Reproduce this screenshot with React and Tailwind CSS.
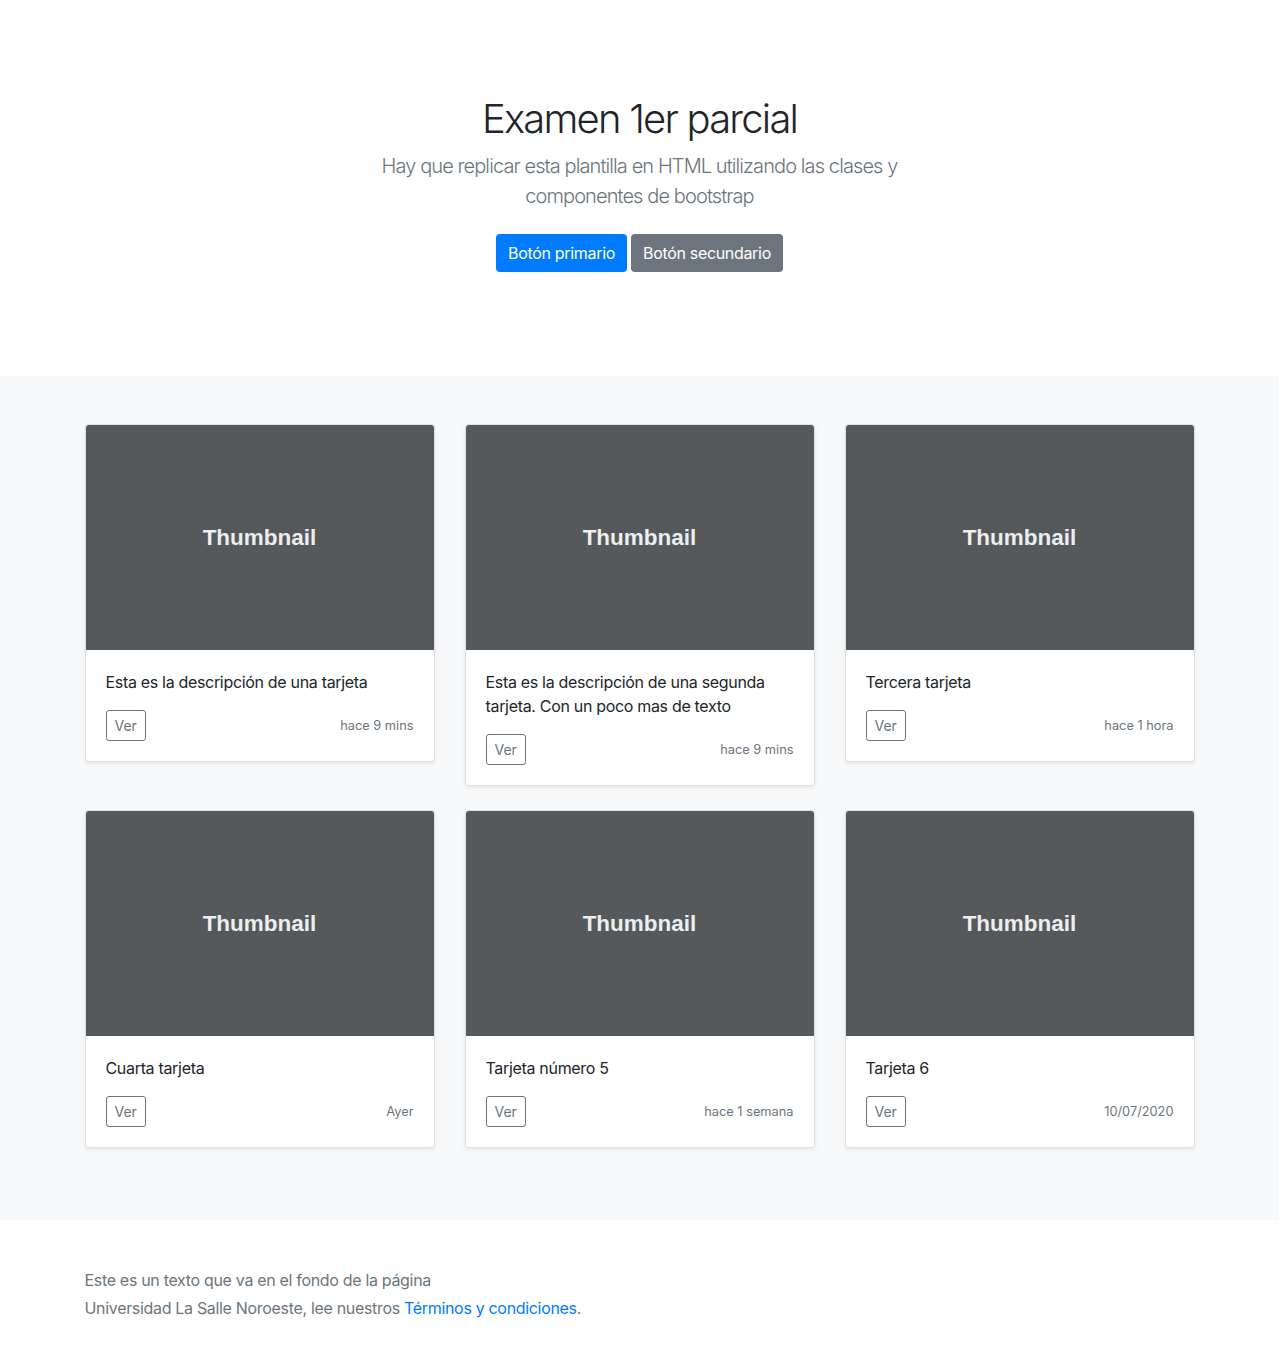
import React from "react";

const cards = [
  { text: ["Esta es la descripción de una tarjeta"], time: "hace 9 mins" },
  { text: ["Esta es la descripción de una segunda", "tarjeta. Con un poco mas de texto"], time: "hace 9 mins" },
  { text: ["Tercera tarjeta"], time: "hace 1 hora" },
  { text: ["Cuarta tarjeta"], time: "Ayer" },
  { text: ["Tarjeta número 5"], time: "hace 1 semana" },
  { text: ["Tarjeta 6"], time: "10/07/2020" },
];

function Card({ text, time }) {
  return (
    <div className="rounded-[4px] border border-black/[0.125] bg-white shadow-[0_2px_4px_rgba(0,0,0,0.075)] overflow-hidden">
      <div className="h-[225px] bg-[#55595c] flex items-center justify-center">
        <span className="font-['Liberation_Sans',Arial,sans-serif] font-bold text-[22.5px] text-[#eceeef]">
          Thumbnail
        </span>
      </div>
      <div className="p-5">
        <p className="text-base leading-6 tracking-[-0.02em] text-[#212529] mb-4">
          {text.map((t, i) => (
            <React.Fragment key={i}>
              {i > 0 && <br />}
              {t}
            </React.Fragment>
          ))}
        </p>
        <div className="flex items-center justify-between">
          <button className="h-[31px] px-2 border border-[#6c757d] rounded-[3px] text-[14px] text-[#6c757d] leading-[21px]">
            Ver
          </button>
          <small className="text-[12.8px] text-[#6c757d]">{time}</small>
        </div>
      </div>
    </div>
  );
}

export default function App() {
  return (
    <div className="min-h-[1372px] bg-white font-['Inter','Helvetica_Neue',Arial,sans-serif] text-[#212529]">
      {/* top navbar shadow */}
      <header className="relative z-10 h-0 shadow-[0_0_10px_rgba(0,0,0,0.12)]" />

      {/* hero */}
      <section className="text-center pt-[95px] pb-[104px]">
        <div className="max-w-[540px] mx-auto">
          <h1 className="text-[40px] leading-[48px] font-light mb-2 tracking-[-0.045em]">
            Examen 1er parcial
          </h1>
          <p className="text-[20px] leading-[30px] font-light text-[#6c757d] tracking-[-0.045em] whitespace-nowrap">
            Hay que replicar esta plantilla en HTML utilizando las clases y
            <br />
            componentes de bootstrap
          </p>
          <div className="flex justify-center gap-1 mt-[23px]">
            <button className="h-[38px] px-3 rounded-[4px] bg-[#007bff] text-white text-base tracking-[-0.02em]">
              Botón primario
            </button>
            <button className="h-[38px] px-3 rounded-[4px] bg-[#6c757d] text-white text-base tracking-[-0.02em]">
              Botón secundario
            </button>
          </div>
        </div>
      </section>

      {/* album */}
      <div className="bg-[#f8f9fa] pt-12 pb-[72px]">
        <div className="w-[1110px] mx-auto grid grid-cols-3 gap-x-[30px] gap-y-6 items-start">
          {cards.map((c, i) => (
            <Card key={i} {...c} />
          ))}
        </div>
      </div>

      {/* footer */}
      <footer className="py-12">
        <div className="w-[1110px] mx-auto text-[#6c757d] text-base leading-6 tracking-[-0.02em]">
          <p className="mb-1">Este es un texto que va en el fondo de la página</p>
          <p>
            Universidad La Salle Noroeste, lee nuestros{" "}
            <a href="#" className="text-[#007bff]">
              Términos y condiciones
            </a>
            .
          </p>
        </div>
      </footer>
    </div>
  );
}
